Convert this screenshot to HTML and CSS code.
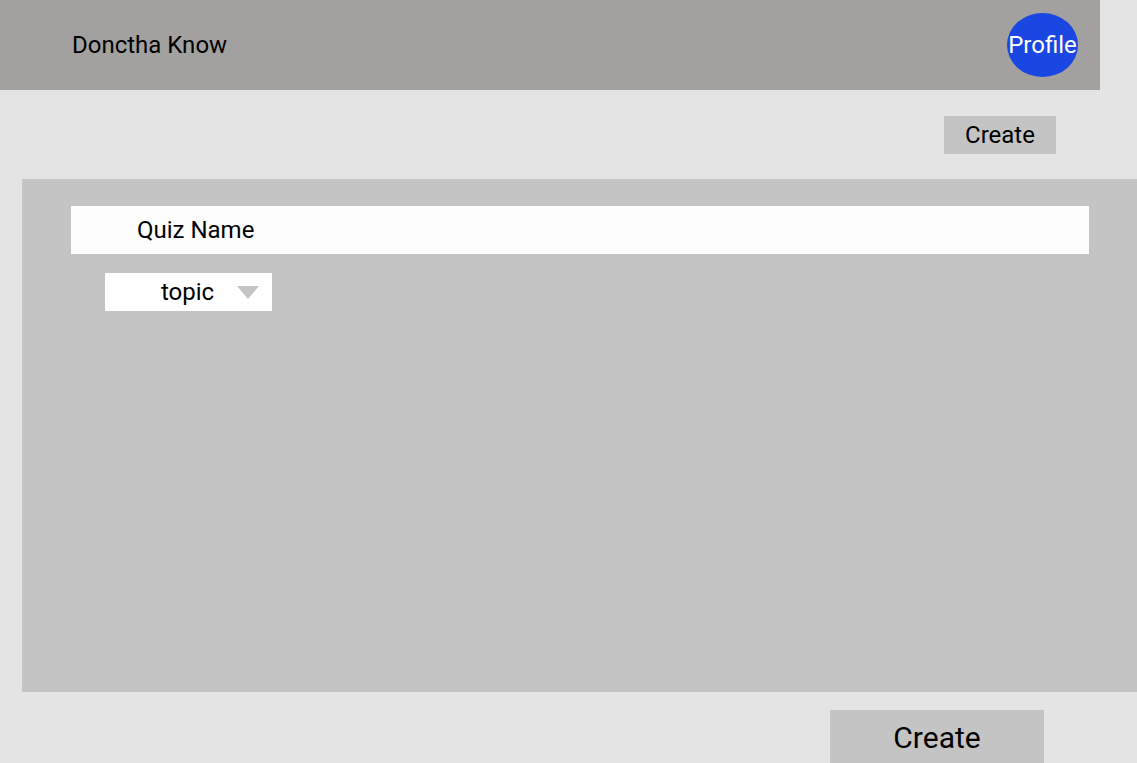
FILE: index.html
```html
<!DOCTYPE html>
<html>
<head>
<meta charset="utf-8">
<link rel="stylesheet" href="styles.css">
</head>
<body>
<header class="topbar">
  <div class="brand">Donctha Know</div>
  <div class="profile">Profile</div>
</header>
<div class="toolbar">
  <button class="btn-small">Create</button>
</div>
<main class="panel">
  <div class="quiz-name">Quiz Name</div>
  <div class="topic">
    <span class="topic-label">topic</span>
    <span class="caret"></span>
  </div>
</main>
<div class="footer">
  <button class="btn-large">Create</button>
</div>
</body>
</html>
```
FILE: styles.css
```css
html, body {
  margin: 0;
  padding: 0;
}
body {
  background: #e4e4e4;
  font-family: Roboto, "Liberation Sans", sans-serif;
  color: #000;
  width: 1137px;
  height: 763px;
  overflow: hidden;
}
.topbar {
  width: 1100px;
  height: 90px;
  background: #a3a19f;
  display: flex;
  align-items: center;
  justify-content: space-between;
  padding: 0 22px 0 72px;
  box-sizing: border-box;
}
.brand {
  font-size: 24px;
}
.profile {
  width: 71px;
  height: 64px;
  border-radius: 50%;
  background: #1a47e2;
  color: #fff;
  font-size: 24px;
  display: flex;
  align-items: center;
  justify-content: center;
  white-space: nowrap;
}
.toolbar {
  display: flex;
  justify-content: flex-end;
  padding: 26px 81px 0 0;
}
button {
  font-family: inherit;
  border: none;
  color: #000;
  padding: 0;
}
.btn-small {
  width: 112px;
  height: 38px;
  background: #c4c4c4;
  font-size: 24px;
}
.panel {
  display: block;
  margin: 25px 0 0 22px;
  width: 1115px;
  height: 513px;
  background: #c4c4c4;
  padding: 27px 0 0 49px;
  box-sizing: border-box;
}
.quiz-name {
  width: 1018px;
  height: 48px;
  background: #fdfdfd;
  font-size: 24px;
  display: flex;
  align-items: center;
  padding-left: 66px;
  box-sizing: border-box;
}
.topic {
  margin: 19px 0 0 34px;
  width: 167px;
  height: 38px;
  background: #fff;
  display: flex;
  align-items: center;
  padding-left: 56px;
  box-sizing: border-box;
  font-size: 24px;
}
.caret {
  margin-left: 23px;
  width: 0;
  height: 0;
  border-left: 11px solid transparent;
  border-right: 11px solid transparent;
  border-top: 13px solid #c4c4c4;
}
.footer {
  padding: 18px 0 0 830px;
}
.btn-large {
  width: 214px;
  height: 60px;
  background: #c4c4c4;
  font-size: 30px;
  display: flex;
  align-items: flex-start;
  justify-content: center;
  padding-top: 10px;
  box-sizing: border-box;
}
```
